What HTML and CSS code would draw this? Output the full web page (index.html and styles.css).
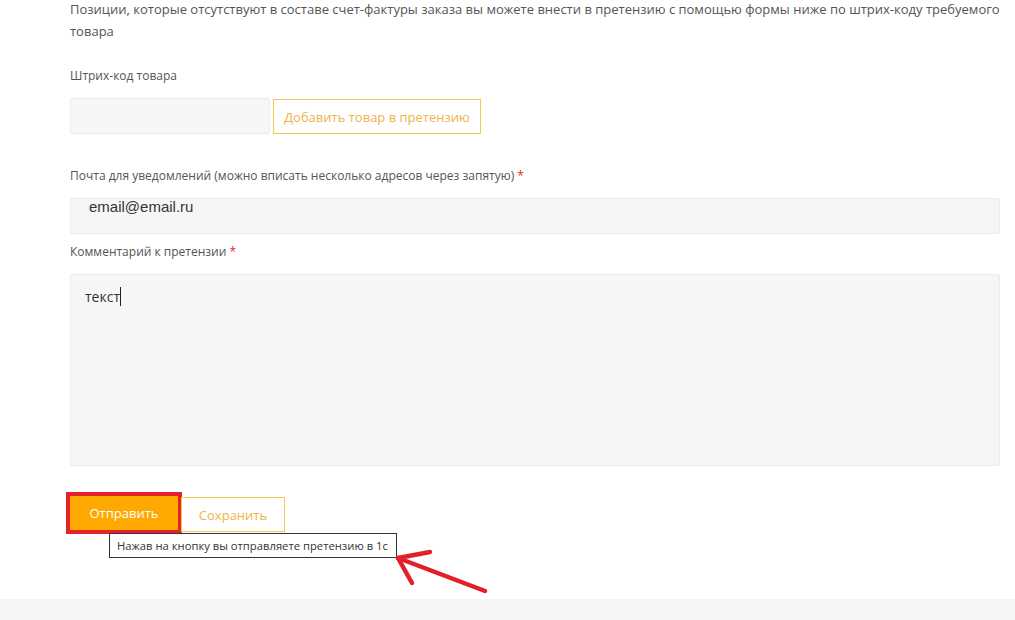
FILE: index.html
```html
<!DOCTYPE html>
<html lang="ru">
<head>
  <meta charset="UTF-8" />
  <meta name="viewport" content="width=device-width, initial-scale=1.0" />
  <title>Претензия</title>
  <link rel="stylesheet" href="styles.css">
</head>
<body>

  <div class="container">
    <p class="intro">Позиции, которые отсутствуют в составе счет-фактуры заказа вы можете внести в претензию с помощью формы ниже по штрих-коду требуемого товара</p>

    <!-- Barcode -->
    <div class="label">Штрих-код товара</div>
    <div class="barcode-row">
      <input type="text" class="field barcode-field" />
      <div class="outline-button add-button">Добавить товар в претензию</div>
    </div>

    <!-- Email -->
    <div class="label label-wide">Почта для уведомлений (можно вписать несколько адресов через запятую) <span class="required">*</span></div>
    <input type="text" class="field email-field" value="email@email.ru" />

    <!-- Comment -->
    <div class="label label-tight">Комментарий к претензии <span class="required">*</span></div>
    <div class="field comment-field">текст<span class="caret"></span></div>

    <!-- Actions -->
    <div class="actions">
      <div class="send-button">Отправить</div>
      <div class="outline-button save-button">Сохранить</div>
      <div class="tooltip">Нажав на кнопку вы отправляете претензию в 1с</div>
      <svg class="arrow" width="110" height="60" viewBox="0 0 110 60">
        <g fill="none" stroke="#e3202a" stroke-width="4.5" stroke-linecap="round">
          <line x1="106" y1="57" x2="19" y2="24" />
          <line x1="19" y1="24" x2="51" y2="18" />
          <line x1="19" y1="24" x2="33" y2="49" />
        </g>
      </svg>
    </div>
  </div>

  <div class="footer"></div>

</body>
</html>
```

FILE: styles.css
```css
body {
  font-family: "Open Sans", Arial, sans-serif;
  font-size: 13px;
  color: #555;
  background-color: #fff;
  margin: 0;
  padding: 0;
}

.container {
  width: 932px;
  padding-left: 70px;
}

.intro {
  margin: -2px 0 23px 0;
  line-height: 22px;
}

.label {
  font-size: 12px;
  line-height: 22px;
  margin-bottom: 11px;
}

.label-wide {
  margin-top: 31px;
}

.label-tight {
  margin-top: 7px;
}

.required {
  color: #e3262d;
}

.field {
  box-sizing: border-box;
  background-color: #f6f6f6;
  border: 1px solid #ececec;
  border-radius: 2px;
  outline: none;
  display: block;
  margin: 0;
}

/* Barcode row */
.barcode-row {
  display: flex;
  gap: 3px;
}

.barcode-field {
  width: 200px;
  height: 36px;
}

.outline-button {
  box-sizing: border-box;
  border: 1px solid #f2c94c;
  color: #f0b24a;
  background-color: #fff;
  display: flex;
  align-items: center;
  justify-content: center;
  cursor: pointer;
}

.add-button {
  width: 208px;
  height: 35px;
  margin-top: 1px;
}

/* Email */
.email-field {
  width: 930px;
  height: 36px;
  padding: 0 18px 19px 18px;
  font-family: Arial, "Liberation Sans", sans-serif;
  font-size: 15px;
  color: #333;
}

/* Comment */
.comment-field {
  width: 930px;
  height: 192px;
  padding: 12px 14px;
  font-size: 14px;
  line-height: 20px;
  color: #333;
}

.caret {
  display: inline-block;
  width: 1px;
  height: 19px;
  background-color: #222;
  vertical-align: -4px;
}

/* Actions */
.actions {
  position: relative;
  display: flex;
  align-items: flex-start;
  gap: 3px;
  margin-top: 30px;
  margin-bottom: 67px;
}

.send-button {
  width: 108px;
  height: 34px;
  background-color: #ffa800;
  color: #fff;
  display: flex;
  align-items: center;
  justify-content: center;
  outline: 4px solid #e3222b;
  cursor: pointer;
}

.save-button {
  width: 104px;
  height: 35px;
  margin-top: 1px;
}

.tooltip {
  position: absolute;
  left: 39px;
  top: 37px;
  box-sizing: border-box;
  width: 288px;
  height: 25px;
  padding: 0 7px;
  border: 1px solid #333;
  background-color: #fff;
  color: #333;
  font-size: 11.25px;
  line-height: 23px;
  white-space: nowrap;
}

.arrow {
  position: absolute;
  left: 309px;
  top: 38px;
}

.footer {
  height: 30px;
  background-color: #f5f5f7;
}
```
